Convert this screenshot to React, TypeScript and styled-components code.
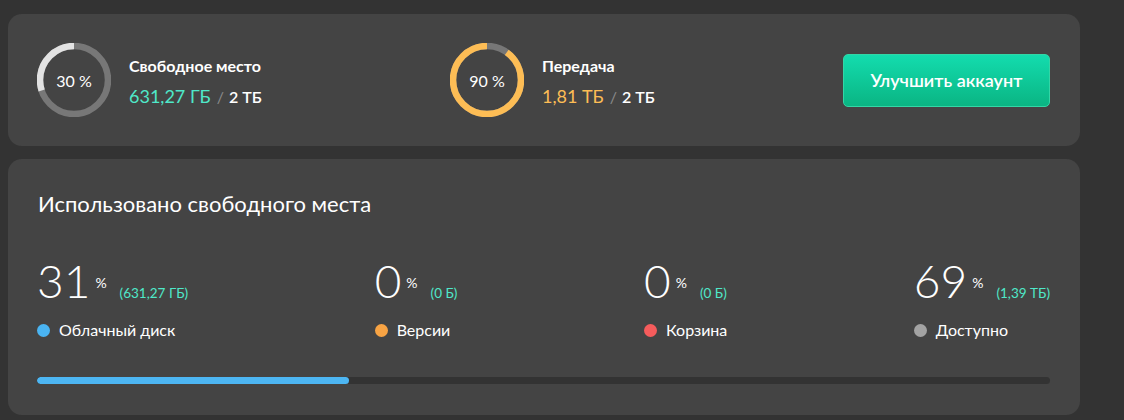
import React from "react";
import styled, { createGlobalStyle } from "styled-components";

const GlobalStyle = createGlobalStyle`
  html, body { margin: 0; padding: 0; background: #333333; }
  body { font-family: Lato, "Noto Sans", sans-serif; color: #ffffff; }
`;

const Page = styled.div`
  width: 1124px;
  height: 420px;
  box-sizing: border-box;
  padding: 14px 44px 0 8px;
  display: flex;
  flex-direction: column;
  gap: 13px;
`;

const Card = styled.section`
  background: #444444;
  border-radius: 14px;
  box-sizing: border-box;
`;

const SummaryCard = styled(Card)`
  height: 132px;
  padding: 0 30px 0 29px;
  display: flex;
  align-items: center;
  justify-content: space-between;
`;

const Group = styled.div`
  display: flex;
  align-items: center;
  gap: 18px;
`;

const RingBox = styled.div`
  display: grid;
  width: 74px;
  height: 74px;
  & > * { grid-area: 1 / 1; }
`;

const RingLabel = styled.div`
  display: flex;
  align-items: center;
  justify-content: center;
  font-size: 16px;
  color: #ffffff;
`;

const InfoBlock = styled.div`
  display: flex;
  flex-direction: column;
  gap: 8px;
  padding-top: 4px;
`;

const InfoTitle = styled.div`
  font-size: 16px;
  font-weight: 700;
  line-height: 20px;
`;

const InfoValue = styled.div`
  display: flex;
  align-items: baseline;
  line-height: 24px;
`;

const Amount = styled.span<{ $color: string }>`
  font-size: 18px;
  color: ${(p) => p.$color};
`;

const Slash = styled.span`
  font-size: 16px;
  color: #8a8a8a;
  margin: 0 5px 0 6px;
`;

const Total = styled.span`
  font-size: 16px;
  font-weight: 600;
  color: #ffffff;
`;

const UpgradeButton = styled.button`
  width: 207px;
  height: 53px;
  border: 1px solid #33d6a6;
  border-radius: 5px;
  background: linear-gradient(to bottom, #13dcae, #0ab583);
  color: #ffffff;
  font-family: Lato, "Noto Sans", sans-serif;
  font-size: 18px;
  font-weight: 600;
  cursor: pointer;
  padding: 0;
`;

const UsageCard = styled(Card)`
  height: 256px;
  padding: 32px 30px 30px 29px;
  display: flex;
  flex-direction: column;
`;

const UsageTitle = styled.h2`
  margin: 0 0 0 1px;
  font-size: 22px;
  font-weight: 400;
  line-height: 26px;
`;

const StatsRow = styled.div`
  display: flex;
  justify-content: space-between;
  margin-top: 40px;
`;

const Stat = styled.div`
  display: flex;
  flex-direction: column;
  gap: 16px;
`;

const StatValue = styled.div`
  display: flex;
  align-items: baseline;
`;

const BigNumber = styled.span`
  font-size: 46px;
  font-weight: 300;
  line-height: 48px;
`;

const Percent = styled.span`
  align-self: flex-start;
  margin: 19px 0 0 5px;
  font-size: 14px;
  line-height: 14px;
`;

const SubValue = styled.span`
  margin-left: 13px;
  font-size: 13.5px;
  color: #4fe8c9;
`;

const Legend = styled.div`
  display: flex;
  align-items: center;
  gap: 9px;
  font-size: 16px;
  line-height: 18px;
`;

const Dot = styled.span<{ $color: string }>`
  width: 13px;
  height: 13px;
  border-radius: 50%;
  background: ${(p) => p.$color};
  flex: none;
`;

const Track = styled.div`
  margin-top: 38px;
  height: 7px;
  border-radius: 4px;
  background: #333333;
  overflow: hidden;
`;

const Fill = styled.div`
  height: 100%;
  background: #4db6f3;
  border-radius: 4px;
`;

const Ring: React.FC<{ pct: number; color: string }> = ({ pct, color }) => {
  const r = 34;
  const c = 2 * Math.PI * r;
  return (
    <RingBox>
      <svg width="74" height="74" viewBox="0 0 74 74">
        <circle cx="37" cy="37" r={r} fill="none" stroke="#777777" strokeWidth="6.5" />
        <circle
          cx="37"
          cy="37"
          r={r}
          fill="none"
          stroke={color}
          strokeWidth="6.5"
          strokeDasharray={`${(c * pct) / 100} ${c}`}
          transform="translate(74 0) scale(-1 1) rotate(-90 37 37)"
        />
      </svg>
      <RingLabel>{pct} %</RingLabel>
    </RingBox>
  );
};

const stats = [
  { n: "31", sub: "(631,27 ГБ)", label: "Облачный диск", color: "#4ab4f2" },
  { n: "0", sub: "(0 Б)", label: "Версии", color: "#f8a444" },
  { n: "0", sub: "(0 Б)", label: "Корзина", color: "#f65c5c" },
  { n: "69", sub: "(1,39 ТБ)", label: "Доступно", color: "#a3a3a3" },
];

export default function App() {
  return (
    <>
      <GlobalStyle />
      <Page>
        <SummaryCard>
          <Group>
            <Ring pct={30} color="#e2e2e2" />
            <InfoBlock>
              <InfoTitle>Свободное место</InfoTitle>
              <InfoValue>
                <Amount $color="#4fe8c9">631,27 ГБ</Amount>
                <Slash>/</Slash>
                <Total>2 ТБ</Total>
              </InfoValue>
            </InfoBlock>
          </Group>
          <Group>
            <Ring pct={90} color="#fdbd55" />
            <InfoBlock>
              <InfoTitle>Передача</InfoTitle>
              <InfoValue>
                <Amount $color="#fdbd55">1,81 ТБ</Amount>
                <Slash>/</Slash>
                <Total>2 ТБ</Total>
              </InfoValue>
            </InfoBlock>
          </Group>
          <UpgradeButton>Улучшить аккаунт</UpgradeButton>
        </SummaryCard>
        <UsageCard>
          <UsageTitle>Использовано свободного места</UsageTitle>
          <StatsRow>
            {stats.map((s) => (
              <Stat key={s.label}>
                <StatValue>
                  <BigNumber>{s.n}</BigNumber>
                  <Percent>%</Percent>
                  <SubValue>{s.sub}</SubValue>
                </StatValue>
                <Legend>
                  <Dot $color={s.color} />
                  {s.label}
                </Legend>
              </Stat>
            ))}
          </StatsRow>
          <Track>
            <Fill style={{ width: "30.8%" }} />
          </Track>
        </UsageCard>
      </Page>
    </>
  );
}
